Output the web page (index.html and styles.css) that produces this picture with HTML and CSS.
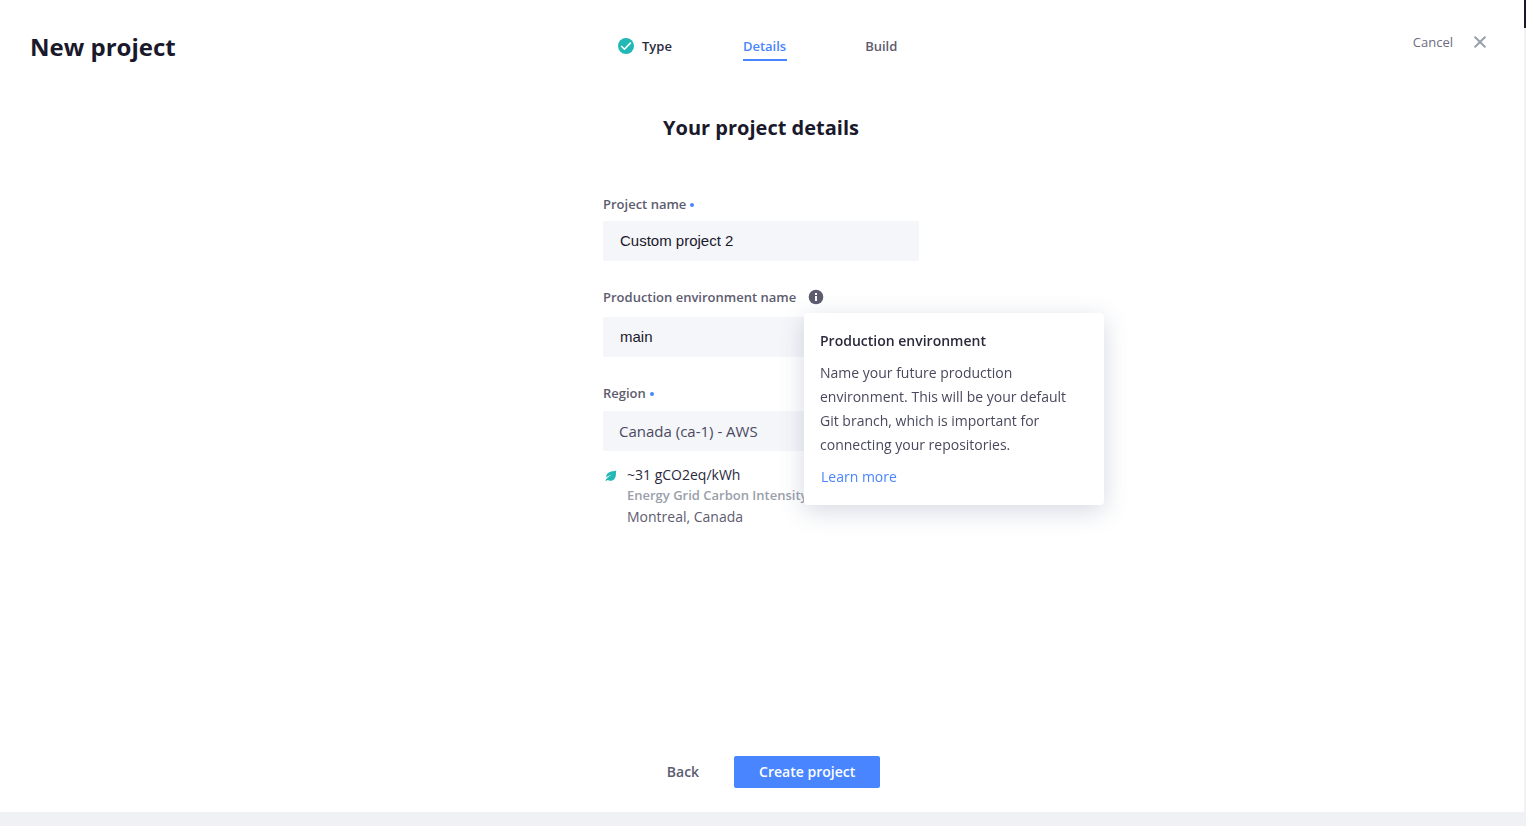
FILE: index.html
```html
<!DOCTYPE html>
<html lang="en">
<head>
<meta charset="utf-8">
<title>New project</title>
<link rel="stylesheet" href="styles.css">
</head>
<body>
<div class="backdrop"></div>
<main class="panel">
  <header class="header">
    <h1 class="title">New project</h1>
    <nav aria-label="Progress">
      <ol class="steps">
        <li class="step step-done">
          <svg class="step-icon" viewBox="0 0 16 16" aria-hidden="true"><circle cx="8" cy="8" r="8" fill="#22b8b5"/><path d="M3.200 8l3.200 3.200 6.400-6.600" fill="none" stroke="#fff" stroke-width="1.600"/></svg>
          <span>Type</span>
        </li>
        <li class="step step-current" aria-current="step"><span>Details</span></li>
        <li class="step step-next"><span>Build</span></li>
      </ol>
    </nav>
    <button class="cancel" type="button">Cancel
      <svg class="cancel-icon" viewBox="0 0 12 12" aria-hidden="true"><path d="M1.200 1.200l9.600 9.600M10.800 1.200l-9.600 9.600" fill="none" stroke="#98a0ab" stroke-width="2" stroke-linecap="round"/></svg>
    </button>
  </header>

  <form class="form" id="details">
    <h2 class="form-title">Your project details</h2>

    <div class="field">
      <label class="label" for="name">Project name<span class="dot"></span></label>
      <input class="control" id="name" type="text" value="Custom project 2" required>
    </div>

    <div class="field field-env">
      <div class="label-row">
        <label class="label" for="env">Production environment name</label>
        <div class="info">
          <button class="info-button" type="button" aria-label="About the production environment" aria-describedby="env-tip">
            <svg class="info-icon" viewBox="0 0 16 16" aria-hidden="true"><circle cx="8" cy="8" r="7.300" fill="#5d5c6f"/><path d="M7 4h2v2H7zM7 7h2v5H7z" fill="#fff"/></svg>
          </button>
          <div class="tooltip" id="env-tip" role="tooltip">
            <h3 class="tooltip-title">Production environment</h3>
            <p class="tooltip-text">Name your future production environment. This will be your default Git branch, which is important for connecting your repositories.</p>
            <a class="tooltip-link" href="#learn">Learn more</a>
          </div>
        </div>
      </div>
      <input class="control" id="env" type="text" value="main">
    </div>

    <div class="field field-region">
      <label class="label" for="region">Region<span class="dot"></span></label>
      <select class="control control-select" id="region">
        <option>Canada (ca-1) - AWS</option>
      </select>
    </div>

    <div class="grid-info">
      <svg class="leaf" viewBox="0 0 12 12" aria-hidden="true"><path d="M11.300.500C9 1.400 7 1.200 4.800 2.100 2 3.200.900 5.200 1.400 7.600 3 6 4.800 5 7.200 4.500 4.600 5.800 2 7.700.400 10.200l.8.900c.5-.4.900-.8 1.300-1.100C4.900 11.400 7.900 10.900 9.600 8.700 11.600 6.200 10.500 3.500 11.300.500z" fill="#22b8b5"/></svg>
      <div>
        <p class="carbon">~31 gCO2eq/kWh</p>
        <p class="carbon-caption">Energy Grid Carbon Intensity</p>
        <p class="place">Montreal, Canada</p>
      </div>
    </div>
  </form>

  <footer class="actions">
    <button class="button" type="button">Back</button>
    <button class="button button-primary" type="submit" form="details">Create project</button>
  </footer>
</main>
</body>
</html>
```
FILE: styles.css
```css
* { box-sizing: border-box; }

body {
  margin: 0;
  min-height: 100vh;
  padding: 0 2px 14px 0;
  display: flex;
  background: #f0f1f5;
  color: #1a192b;
  font: 14px/20px "Open Sans", sans-serif;
}

h1, h2, h3, p, ol { margin: 0; padding: 0; }

button {
  border: 0;
  padding: 0;
  background: none;
  font: inherit;
  color: inherit;
  cursor: pointer;
}

/* App bar showing behind the panel */
.backdrop {
  position: absolute;
  inset: 0 0 auto;
  height: 28px;
  background: #1a192b;
}

.panel {
  position: relative;
  flex: 1;
  display: flex;
  flex-direction: column;
  padding: 30px 32px 24px 30px;
  background: #fff;
  border-radius: 0 0 2px 0;
}

.header {
  display: grid;
  grid-template-columns: 1fr 316px 1fr;
  align-items: start;
}

.title { font-size: 24px; line-height: 34px; font-weight: 700; }

.steps {
  display: flex;
  padding: 6px 0 0 15px;
  list-style: none;
  font-size: 13px;
  font-weight: 600;
}

.step { display: flex; align-items: flex-start; color: #5d5c6f; }
.step-icon { width: 16px; height: 16px; margin: 2px 8px 0 0; }
.step-done { color: #2b2a3d; }
.step-current { margin-left: 71px; color: #4885ff; }
.step-current span { padding: 0 1px 3px 0; border-bottom: 2px solid #4885ff; }
.step-next { margin-left: 78px; }

.cancel {
  display: flex;
  align-items: center;
  gap: 21px;
  justify-self: end;
  margin: 2px 6px 0 0;
  font-size: 13px;
  color: #6d6c80;
}
.cancel-icon { width: 12px; height: 12px; }

.form {
  flex: 1;
  width: 316px;
  margin: 0 auto;
  padding-top: 48px;
}

.form-title {
  margin-bottom: 50px;
  font-size: 20px;
  line-height: 32px;
  font-weight: 700;
  text-align: center;
}

.label {
  display: flex;
  align-items: center;
  font-size: 13px;
  font-weight: 600;
  color: #5d5c6f;
}
.dot {
  width: 4px;
  height: 4px;
  margin: 2px 0 0 4px;
  border-radius: 50%;
  background: #4885ff;
}

.control {
  display: block;
  width: 100%;
  height: 40px;
  margin-top: 7px;
  padding: 0 16px 2px;
  border: 1px solid #f5f6fa;
  border-radius: 2px;
  background: #f5f6fa;
  color: #1a192b;
  font: 15px "Liberation Sans", sans-serif;
}
.control-select {
  appearance: none;
  padding: 0 16px;
  border: 0;
  color: #4a495e;
  font-family: "Open Sans", sans-serif;
}

.field-env { margin-top: 26px; }
.field-env .control { margin-top: 10px; }
.field-region { margin-top: 26px; }
.field-region .control { margin-top: 8px; }

.label-row { display: flex; align-items: center; gap: 12px; }
.info { position: relative; display: flex; }
.info-button { display: flex; }
.info-icon { width: 16px; height: 16px; }

.tooltip {
  position: absolute;
  top: 24px;
  left: -4px;
  z-index: 1;
  width: 300px;
  padding: 16px;
  border-radius: 4px;
  background: #fff;
  box-shadow: 0 6px 24px rgba(75, 97, 128, 0.24);
  line-height: 24px;
  color: #4a495e;
  will-change: transform;
}
.tooltip-title {
  margin-bottom: 8px;
  font-size: 14px;
  font-weight: 600;
  color: #2b2a3d;
}
.tooltip-link {
  display: block;
  margin: 8px 0 0 1px;
  color: #4885ff;
  text-decoration: none;
}

.grid-info { display: flex; gap: 10px; margin-top: 14px; padding-left: 2px; }
.leaf { width: 12px; height: 12px; margin-top: 5px; }
.carbon { color: #2b2a3d; }
.carbon-caption {
  margin-bottom: 2px;
  font-size: 13px;
  line-height: 20px;
  font-weight: 600;
  color: #9aa0aa;
}
.place { color: #5d5c6f; }

.actions { display: flex; justify-content: center; gap: 10px; }
.button {
  height: 32px;
  padding: 0 25px;
  border-radius: 2px;
  font-weight: 600;
  color: #5d5c6f;
}
.button-primary { background: #4885ff; color: #fff; }
```
